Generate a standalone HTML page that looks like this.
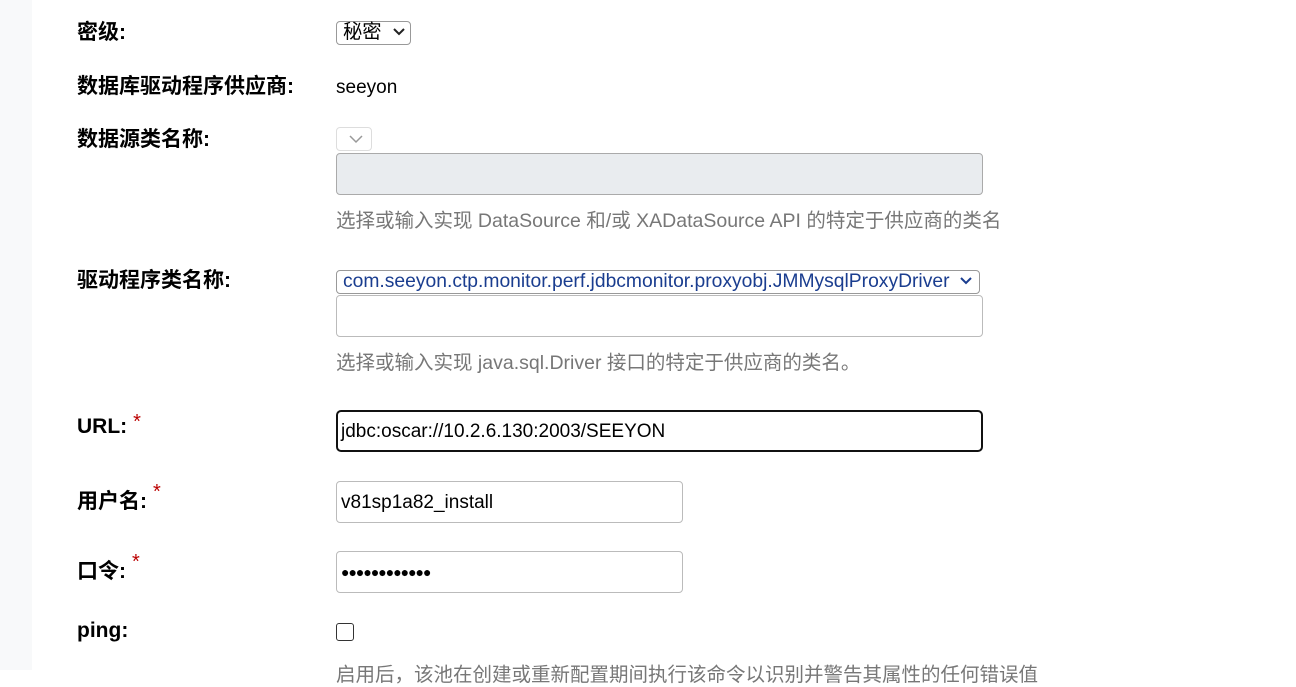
<!DOCTYPE html>
<html><head><meta charset="utf-8"><style>
body{margin:0;width:1296px;height:670px;overflow:hidden;background:#fff;font-family:"Liberation Sans","Noto Sans CJK SC",sans-serif;font-size:19px;color:#000;position:relative}
.side{position:absolute;left:0;top:0;width:32px;height:670px;background:#f8f9fa}
.a{position:absolute}
.l{position:absolute;left:77px;font-weight:bold;font-size:21px}
.star{color:#b00;font-weight:normal;font-size:20px;vertical-align:top;margin-left:6px;position:relative;top:-4px}
.sel{position:absolute;border:1px solid #999;border-radius:4px;background:#fff;box-sizing:border-box;height:24px;font-size:19.3px;line-height:22px;padding-left:6px;white-space:nowrap}
.inp{position:absolute;left:336px;border:1px solid #bbb;border-radius:4px;box-sizing:border-box;background:#fff;height:42px;font-size:19px;line-height:40px;padding-left:4px}
.hint{position:absolute;left:336px;color:#777;font-size:19.5px;white-space:nowrap}
.chev{position:absolute;right:5px;top:5px}
</style></head><body>
<div class="side"></div>
<div class="l" style="top:16px">密级:</div>
<div class="sel" style="left:336px;top:21px;width:75px">秘密<svg class="chev" width="12" height="10" viewBox="0 0 12 10"><path d="M1 2l5 5 5-5" stroke="#222" stroke-width="2" fill="none"/></svg></div>
<div class="l" style="top:70px">数据库驱动程序供应商:</div>
<div class="a" style="left:336px;top:77px">seeyon</div>
<div class="l" style="top:123px">数据源类名称:</div>
<div class="sel" style="left:336px;top:127px;width:36px;border-color:#ddd"><svg class="chev" style="right:8px;top:6px" width="14" height="10" viewBox="0 0 14 10"><path d="M1 2l6 6 6-6" stroke="#999" stroke-width="1.5" fill="none"/></svg></div>
<div class="inp" style="top:153px;width:647px;background:#e9ecef;border-color:#aaa"></div>
<div class="hint" style="top:204px">选择或输入实现 DataSource 和/或 XADataSource API 的特定于供应商的类名</div>
<div class="l" style="top:264px">驱动程序类名称:</div>
<div class="sel" style="left:336px;top:270px;width:644px;color:#1a3d8f">com.seeyon.ctp.monitor.perf.jdbcmonitor.proxyobj.JMMysqlProxyDriver<svg class="chev" style="right:7px" width="12" height="10" viewBox="0 0 12 10"><path d="M1 2l5 5 5-5" stroke="#1a3d8f" stroke-width="2" fill="none"/></svg></div>
<div class="inp" style="top:295px;width:647px"></div>
<div class="hint" style="top:346px">选择或输入实现 java.sql.Driver 接口的特定于供应商的类名。</div>
<div class="l" style="top:415px">URL:<span class="star">*</span></div>
<div class="inp" style="top:410px;width:647px;border:2px solid #111;border-radius:5px;line-height:40px;padding-left:3px">jdbc:oscar://10.2.6.130:2003/SEEYON</div>
<div class="l" style="top:485px">用户名:<span class="star">*</span></div>
<div class="inp" style="top:481px;width:347px;line-height:42px">v81sp1a82_install</div>
<div class="l" style="top:555px">口令:<span class="star">*</span></div>
<div class="inp" style="top:551px;width:347px;font-size:14px;letter-spacing:-1px">●●●●●●●●●●●●</div>
<div class="l" style="top:619px">ping:</div>
<div class="a" style="left:336px;top:623px;width:18px;height:18px;border:1.5px solid #333;border-radius:3px;box-sizing:border-box"></div>
<div class="hint" style="top:658px">启用后，该池在创建或重新配置期间执行该命令以识别并警告其属性的任何错误值</div>
</body></html>
